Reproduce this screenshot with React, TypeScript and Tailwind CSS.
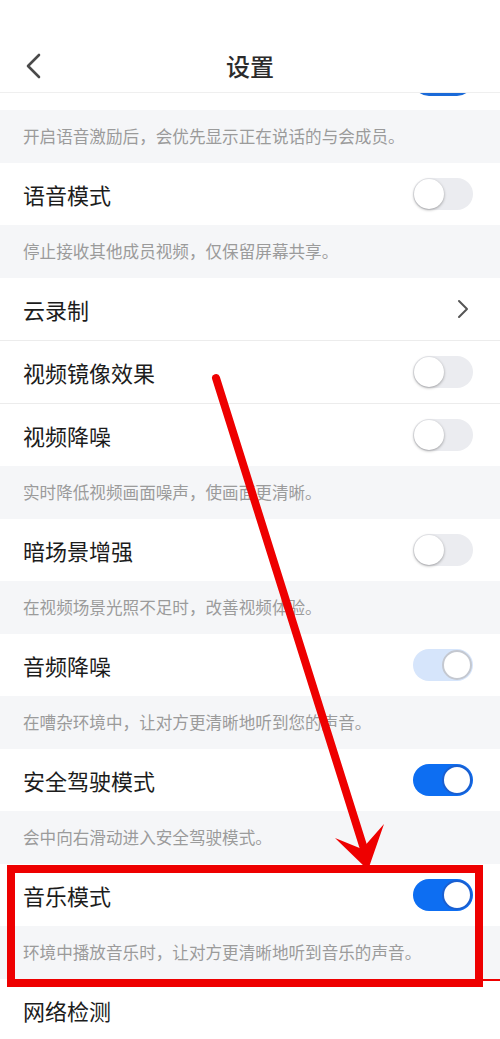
import React from 'react';

type Row =
  | { kind: 'toggle'; label: string; state: 'off' | 'on' | 'dim'; divider?: boolean }
  | { kind: 'link'; label: string; divider?: boolean }
  | { kind: 'desc'; text: string };

const rows: Row[] = [
  { kind: 'desc', text: '开启语音激励后，会优先显示正在说话的与会成员。' },
  { kind: 'toggle', label: '语音模式', state: 'off' },
  { kind: 'desc', text: '停止接收其他成员视频，仅保留屏幕共享。' },
  { kind: 'link', label: '云录制', divider: true },
  { kind: 'toggle', label: '视频镜像效果', state: 'off', divider: true },
  { kind: 'toggle', label: '视频降噪', state: 'off' },
  { kind: 'desc', text: '实时降低视频画面噪声，使画面更清晰。' },
  { kind: 'toggle', label: '暗场景增强', state: 'off' },
  { kind: 'desc', text: '在视频场景光照不足时，改善视频体验。' },
  { kind: 'toggle', label: '音频降噪', state: 'dim' },
  { kind: 'desc', text: '在嘈杂环境中，让对方更清晰地听到您的声音。' },
  { kind: 'toggle', label: '安全驾驶模式', state: 'on' },
  { kind: 'desc', text: '会中向右滑动进入安全驾驶模式。' },
  { kind: 'toggle', label: '音乐模式', state: 'on' },
  { kind: 'desc', text: '环境中播放音乐时，让对方更清晰地听到音乐的声音。' },
  { kind: 'link', label: '网络检测' },
];

function Toggle({ state }: { state: 'off' | 'on' | 'dim' }) {
  if (state === 'off') {
    return (
      <div className="flex h-[32px] w-[60px] items-center rounded-full bg-[#ebecf0] px-[1px]">
        <div className="h-[30px] w-[30px] rounded-full bg-white shadow-[0_1px_3px_rgba(0,0,0,0.35)]" />
      </div>
    );
  }
  const track = state === 'on' ? 'bg-[#0d6ef2]' : 'bg-[#d6e5fb]';
  const knob = state === 'on' ? 'border-[#1a5fd0]' : 'border-[#c4c8d0]';
  return (
    <div className={`flex h-[32px] w-[60px] items-center justify-end rounded-full px-[1px] ${track}`}>
      <div className={`h-[30px] w-[30px] rounded-full border-2 bg-white ${knob}`} />
    </div>
  );
}

export default function App() {
  return (
    <div
      className="relative h-[1039px] w-[500px] overflow-hidden bg-white"
      style={{ fontFamily: '"Noto Sans CJK SC", "Noto Sans", sans-serif' }}
    >
      {/* header */}
      <div className="flex h-[93px] flex-col border-b border-[#efefef]">
        <div className="h-[40px]" />
        <div className="relative flex flex-1 items-center justify-center">
          <svg className="absolute left-[24px] top-[12px]" width="20" height="28" viewBox="0 0 20 28" fill="none">
            <path d="M15 3 L4 14 L15 25" stroke="#4a4a4a" strokeWidth="2.6" strokeLinecap="round" strokeLinejoin="round" />
          </svg>
          <span className="text-[24px] font-medium leading-none text-[#2b2b2b]">设置</span>
        </div>
      </div>

      {/* partially scrolled row */}
      <div className="relative h-[17px] overflow-hidden">
        <div className="absolute right-[27px] top-[-29px] h-[32px] w-[60px] rounded-full bg-[#1a6ad8]" />
      </div>

      {rows.map((r, i) =>
        r.kind === 'desc' ? (
          <div key={i} className="flex h-[53px] items-center bg-[#f5f6f8] px-[23px] text-[16.6px] text-[#9b9b9b]">
            {r.text}
          </div>
        ) : (
          <div
            key={i}
            className={`flex h-[62px] items-center justify-between pl-[23px] pr-[27px] ${r.divider ? 'box-content border-b border-[#ececec]' : ''}`}
          >
            <span className="text-[22px] text-[#1c1c1c]">{r.label}</span>
            {r.kind === 'toggle' ? (
              <Toggle state={r.state} />
            ) : r.label === '云录制' ? (
              <svg width="14" height="20" viewBox="0 0 14 20" fill="none" className="mr-[3px]">
                <path d="M3 2 L11 10 L3 18" stroke="#555" strokeWidth="2" strokeLinecap="round" strokeLinejoin="round" />
              </svg>
            ) : null}
          </div>
        )
      )}

      {/* red annotation box */}
      <div className="absolute left-[7px] top-[865px] h-[122px] w-[476px] border-[8px] border-[#ee0000]" />
      <div className="absolute left-[483px] top-[979px] h-[2px] w-[17px] bg-[#ee0000]" />

      {/* red arrow */}
      <svg className="absolute left-0 top-0" width="500" height="1039" viewBox="0 0 500 1039" fill="none">
        <line x1="216" y1="378" x2="365" y2="852" stroke="#ee0000" strokeWidth="8" strokeLinecap="round" />
        <polygon points="368,870 335,838 362,849 384,824" fill="#ee0000" />
      </svg>
    </div>
  );
}
